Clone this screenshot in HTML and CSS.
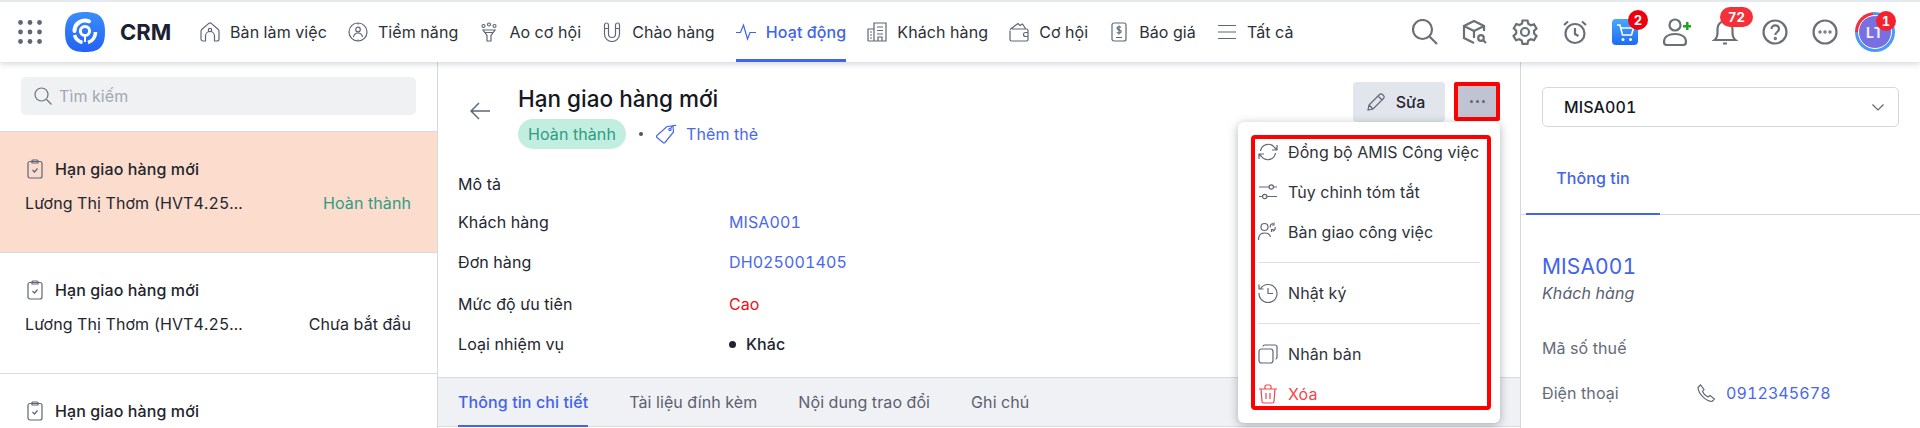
FILE: index.html
```html
<!DOCTYPE html>
<html lang="vi">
<head>
  <meta charset="UTF-8" />
  <meta name="viewport" content="width=device-width,initial-scale=1.0" />
  <title>CRM - Hoạt động</title>
  <link rel="stylesheet" href="styles.css">
</head>
<body>
  <header class="topbar">
    <svg class="apps" width="24" height="24" viewBox="0 0 24 24" fill="#5f6675">
      <circle cx="2.500" cy="2.500" r="2.400"/><circle cx="12" cy="2.500" r="2.400"/><circle cx="21.500" cy="2.500" r="2.400"/>
      <circle cx="2.500" cy="12" r="2.400"/><circle cx="12" cy="12" r="2.400"/><circle cx="21.500" cy="12" r="2.400"/>
      <circle cx="2.500" cy="21.500" r="2.400"/><circle cx="12" cy="21.500" r="2.400"/><circle cx="21.500" cy="21.500" r="2.400"/>
    </svg>
    <svg class="logo" width="40" height="40" viewBox="0 0 40 40">
      <defs><linearGradient id="logoBg" x1="0" y1="0" x2="0" y2="1"><stop offset="0" stop-color="#3a8dfb"/><stop offset="1" stop-color="#2361f6"/></linearGradient></defs>
      <path d="M20 0C33 0 40 4 40 20S33 40 20 40 0 36 0 20 7 0 20 0Z" fill="url(#logoBg)"/>
      <circle cx="20" cy="19" r="4.600" fill="none" stroke="#fff" stroke-width="3"/>
      <path d="M9.500 19A10.500 10.500 0 0 1 24 9.300" fill="none" stroke="#fff" stroke-width="4" stroke-linecap="round"/>
      <path d="M9.500 23A11 11 0 0 0 17.500 30.500M30.500 20A11 11 0 0 1 23 30.500" fill="none" stroke="#fff" stroke-width="3.600"/>
      <path d="M20 24V30" stroke="#fff" stroke-width="2"/>
    </svg>
    <span class="brand">CRM</span>

    <nav class="nav">
      <a class="nav-item">
        <svg class="ico" width="20" height="20" viewBox="0 0 20 20"><path d="M1 9.500c0-1 .4-1.700 1-2.200L8.500 1.600a2.300 2.300 0 0 1 3 0L18 7.300c.6.500 1 1.200 1 2.200V17a2 2 0 0 1-2 2h-2.500v-5a4.500 4.500 0 0 0-9 0v5H3a2 2 0 0 1-2-2Z"/><circle cx="10" cy="8" r="1.700"/></svg>
        Bàn làm việc
      </a>
      <a class="nav-item">
        <svg class="ico" width="20" height="20" viewBox="0 0 20 20"><circle cx="10" cy="10" r="9"/><circle cx="10" cy="7.500" r="2.300"/><path d="M5.500 15c.5-3 2.300-4 4.500-4s4 1 4.500 4M10 1v1.500M10 17.500V19"/></svg>
        Tiềm năng
      </a>
      <a class="nav-item">
        <svg class="ico" width="20" height="20" viewBox="0 0 20 20"><circle cx="4.500" cy="4" r="1.500"/><circle cx="10" cy="2.500" r="1.500"/><circle cx="15.500" cy="4" r="1.500"/><path d="M4 8h12l-4 5.500V19H8v-5.500ZM6 10.500h8"/></svg>
        Ao cơ hội
      </a>
      <a class="nav-item">
        <svg class="ico" width="20" height="20" viewBox="0 0 20 20"><path d="M2.500 3a2 2 0 0 1 4 0v9a3.500 3.500 0 0 0 7 0V3a2 2 0 0 1 4 0v9a7.500 7.500 0 0 1-15 0ZM2.500 6.500h4M13.500 6.500h4"/></svg>
        Chào hàng
      </a>
      <a class="nav-item active">
        <svg class="ico" width="20" height="20" viewBox="0 0 20 20"><path d="M0 10.500h4.500L7.500 3l4 14 2.500-6.500h6"/></svg>
        Hoạt động
      </a>
      <a class="nav-item">
        <svg class="ico" width="20" height="20" viewBox="0 0 20 20"><path d="M1 19V7h6M7 19V1h12v18ZM1 19h18M3 10h2M3 13h2M3 16h2M10 5h6M10 8.500h6M10 12h6M11 19v-4h4v4"/></svg>
        Khách hàng
      </a>
      <a class="nav-item">
        <svg class="ico" width="20" height="20" viewBox="0 0 20 20"><path d="M1 7.500 9 1.500l2 2 2.500-1.500 3 4.500M3 7h14.500a1.500 1.500 0 0 1 1.500 1.500v9a1.500 1.500 0 0 1-1.500 1.500h-15A1.500 1.500 0 0 1 1 17.500V8.500M19 10.500h-2.500a2 2 0 0 0 0 4H19"/></svg>
        Cơ hội
      </a>
      <a class="nav-item">
        <svg class="ico ico-quote" width="16" height="20" viewBox="0 0 16 20"><rect x="1" y="1" width="14" height="18" rx="2"/><path d="M5 15.500h6M10 5.500C9.500 4.500 6 4.300 6 6.300c0 2 4.200 1.200 4.200 3.200 0 2-3.700 1.800-4.400.7M8 3.500v9"/></svg>
        Báo giá
      </a>
      <a class="nav-item">
        <svg class="ico" width="20" height="20" viewBox="0 0 20 20"><path d="M1 3.500h18M1 10h18M1 16.500h18"/></svg>
        Tất cả
      </a>
    </nav>

    <div class="tools">
      <svg class="tool" width="26" height="26" viewBox="0 0 26 26"><circle cx="10.500" cy="10.500" r="9.500"/><path d="m17.500 17.500 7.500 7.500"/></svg>
      <svg class="tool" width="26" height="26" viewBox="0 0 26 26"><path d="M12 24 2 19V7l10-5 10 5v5M2 7l10 5 10-5M12 12v7"/><circle cx="19" cy="19" r="2.800"/><path d="m21 21 3 3"/></svg>
      <svg class="tool" width="26" height="26" viewBox="0 0 26 26"><path d="M10.500 1.500h5l.8 3.300 2.500 1.400 3.200-1 2.500 4.300-2.400 2.300v2.800l2.400 2.300-2.500 4.300-3.200-1-2.500 1.400-.8 3.300h-5l-.8-3.300-2.500-1.400-3.200 1-2.500-4.300L4.200 14.400v-2.800L1.800 9.300l2.500-4.300 3.200 1 2.500-1.400Z"/><circle cx="13" cy="13" r="4"/></svg>
      <svg class="tool" width="26" height="26" viewBox="0 0 26 26"><circle cx="13" cy="14.500" r="9.500"/><path d="M13 9v6l3.500 2M2 6l4-3.500M24 6l-4-3.500"/></svg>
      <span class="tool-wrap">
        <svg width="26" height="26" viewBox="0 0 26 26">
          <defs><linearGradient id="cartBg" x1="0" y1="0" x2="0" y2="1"><stop offset="0" stop-color="#49a7fb"/><stop offset="1" stop-color="#1d6cf2"/></linearGradient></defs>
          <rect width="26" height="26" rx="4" fill="url(#cartBg)"/>
          <path d="M5 6h3l2.500 10h9l2-7H9" fill="none" stroke="#fff" stroke-width="1.600"/>
          <circle cx="11" cy="20.500" r="1.500" fill="#fff"/><circle cx="18.500" cy="20.500" r="1.500" fill="#fff"/>
        </svg>
        <span class="badge badge-cart">2</span>
      </span>
      <span class="tool-wrap">
        <svg class="tool" width="26" height="28" viewBox="0 0 26 28"><circle cx="13" cy="7" r="5.500"/><path d="M2 24c0-5 4.500-8 11-8s11 3 11 8c0 2-1.500 3-3 3H5c-1.500 0-3-1-3-3Z"/></svg>
        <span class="plus"></span>
      </span>
      <span class="tool-wrap">
        <svg class="tool" width="26" height="26" viewBox="0 0 26 26"><path d="M2.500 21c2.500-2 3-4 3-7.500V9.500a7.500 7.500 0 0 1 15 0v4c0 3.500.5 5.500 3 7.500ZM11 24.500h4"/></svg>
        <span class="badge badge-bell">72</span>
      </span>
      <svg class="tool" width="26" height="26" viewBox="0 0 26 26"><circle cx="13" cy="13" r="11.500"/><path d="M9.500 10c0-5 7.500-4.500 7.500 0 0 3-3.700 3-3.700 6"/><circle class="solid" cx="13.300" cy="19.500" r=".6"/></svg>
      <svg class="tool" width="26" height="26" viewBox="0 0 26 26"><circle cx="13" cy="13" r="11.500"/><circle class="solid" cx="8" cy="13" r=".6"/><circle class="solid" cx="13" cy="13" r=".6"/><circle class="solid" cx="18" cy="13" r=".6"/></svg>
      <span class="avatar">
        <span class="avatar-in">LT</span>
        <span class="badge badge-avatar">1</span>
      </span>
    </div>
  </header>

  <main class="layout">
    <aside class="list-pane">
      <div class="search-wrap">
        <div class="search">
          <svg class="ico" width="18" height="18" viewBox="0 0 18 18"><circle cx="7.500" cy="7.500" r="6.500"/><path d="m12.500 12.500 5 5"/></svg>
          <span>Tìm kiếm</span>
        </div>
      </div>
      <div class="task selected">
        <div class="task-title">
          <svg class="ico" width="16" height="20" viewBox="0 0 16 20"><rect x="1" y="2.500" width="14" height="16.500" rx="2"/><path d="M5 4V2a1 1 0 0 1 1-1h4a1 1 0 0 1 1 1v2ZM5.500 11l2 2 3-3.500"/></svg>
          Hạn giao hàng mới
        </div>
        <div class="task-sub"><span>Lương Thị Thơm (HVT4.25...</span><span class="done">Hoàn thành</span></div>
      </div>
      <div class="task">
        <div class="task-title">
          <svg class="ico" width="16" height="20" viewBox="0 0 16 20"><rect x="1" y="2.500" width="14" height="16.500" rx="2"/><path d="M5 4V2a1 1 0 0 1 1-1h4a1 1 0 0 1 1 1v2ZM5.500 11l2 2 3-3.500"/></svg>
          Hạn giao hàng mới
        </div>
        <div class="task-sub"><span>Lương Thị Thơm (HVT4.25...</span><span>Chưa bắt đầu</span></div>
      </div>
      <div class="task">
        <div class="task-title">
          <svg class="ico" width="16" height="20" viewBox="0 0 16 20"><rect x="1" y="2.500" width="14" height="16.500" rx="2"/><path d="M5 4V2a1 1 0 0 1 1-1h4a1 1 0 0 1 1 1v2ZM5.500 11l2 2 3-3.500"/></svg>
          Hạn giao hàng mới
        </div>
      </div>
    </aside>

    <section class="detail">
      <div class="detail-body">
        <div class="detail-head">
          <svg class="back" width="20" height="18" viewBox="0 0 20 18"><path d="M20 9H1M9 1 1 9l8 8"/></svg>
          <div>
            <h1 class="detail-title">Hạn giao hàng mới</h1>
            <div class="detail-tags">
              <span class="pill">Hoàn thành</span>
              <span class="sep"></span>
              <svg class="ico-blue" width="21" height="20" viewBox="0 0 21 20"><path d="M1 11.500 11 2.500l6-.5 .5 6-8.500 10.500a1.500 1.500 0 0 1-2 0L1 13.500a1.500 1.500 0 0 1 0-2Z"/><circle cx="14" cy="5.500" r="1.200"/><path d="M15 4c1-2.500 4.500-3.500 5-2"/></svg>
              <a class="link">Thêm thẻ</a>
            </div>
          </div>
        </div>
        <div class="fields">
          <span>Mô tả</span><span></span>
          <span>Khách hàng</span><a class="link">MISA001</a>
          <span>Đơn hàng</span><a class="link">DH025001405</a>
          <span>Mức độ ưu tiên</span><span class="high">Cao</span>
          <span>Loại nhiệm vụ</span><span class="type"><i class="bullet"></i>Khác</span>
        </div>
      </div>
      <div class="tabs">
        <a class="tab active">Thông tin chi tiết</a>
        <a class="tab">Tài liệu đính kèm</a>
        <a class="tab">Nội dung trao đổi</a>
        <a class="tab">Ghi chú</a>
      </div>

      <div class="actions">
        <button class="btn-edit">
          <svg class="ico" width="18" height="18" viewBox="0 0 18 18"><path d="M1 17l1-5L12.500 1.500a2 2 0 0 1 3 0l1 1a2 2 0 0 1 0 3L6 16ZM2 12l4 4M11 3l4 4"/></svg>
          Sửa
        </button>
        <button class="btn-more"><i></i><i></i><i></i></button>
      </div>

      <div class="menu">
        <div class="menu-mark">
          <a class="menu-item">
            <svg class="ico" width="20" height="20" viewBox="0 0 20 20"><path d="M2.500 9A7.800 7.800 0 0 1 16.500 5.500L19 8M19 3v5h-5M17.500 11A7.800 7.800 0 0 1 3.500 14.500L1 12M1 17v-5h5"/></svg>
            Đồng bộ AMIS Công việc
          </a>
          <a class="menu-item">
            <svg class="ico" width="20" height="20" viewBox="0 0 20 20"><path d="M1 5h10M15.500 5H19M1 14.500h3.500M9 14.500h10"/><circle cx="13.300" cy="5" r="2.200"/><circle cx="6.700" cy="14.500" r="2.200"/></svg>
            Tùy chỉnh tóm tắt
          </a>
          <a class="menu-item">
            <svg class="ico" width="20" height="20" viewBox="0 0 20 20"><circle cx="6.500" cy="5" r="3.500"/><path d="M.5 18c0-5 2.500-7 6-7s5.500 1.500 6 4M15 1.500a3 3 0 0 0-2.500 4M14.500 9a3 3 0 0 0 2.500-4M16 .5v2.500h-2M13.500 10V7.500h2"/></svg>
            Bàn giao công việc
          </a>
          <hr class="menu-line">
          <a class="menu-item item-log">
            <svg class="ico" width="20" height="20" viewBox="0 0 20 20"><path d="M2.500 5.500A9 9 0 1 1 1 10M1 1.500v4.500h4.500M10 5v5.500h5"/></svg>
            Nhật ký
          </a>
          <hr class="menu-line">
          <a class="menu-item">
            <svg class="ico" width="20" height="20" viewBox="0 0 20 20"><rect x="1" y="5" width="14" height="14" rx="2.500"/><path d="M5 2.500A1.500 1.500 0 0 1 6.500 1H17a2 2 0 0 1 2 2v10.500a1.500 1.500 0 0 1-1.500 1.500"/></svg>
            Nhân bản
          </a>
          <a class="menu-item danger">
            <svg class="ico" width="20" height="20" viewBox="0 0 20 20"><path d="M1 5h18M7 5V2.500A1.500 1.500 0 0 1 8.500 1h3A1.500 1.500 0 0 1 13 2.500V5M3 5l1 12.500A1.500 1.500 0 0 0 5.500 19h9a1.500 1.500 0 0 0 1.500-1.500L17 5M8 9v6M12 9v6"/></svg>
            Xóa
          </a>
        </div>
      </div>
    </section>

    <aside class="side-pane">
      <div class="select">
        <span>MISA001</span>
        <svg class="ico" width="12" height="7" viewBox="0 0 12 7"><path d="m.5.500 5.500 5.500 5.500-5.500"/></svg>
      </div>
      <div class="side-tabs"><a class="side-tab">Thông tin</a></div>
      <div class="side-body">
        <a class="side-name">MISA001</a>
        <em class="side-kind">Khách hàng</em>
        <div class="side-row tax"><span>Mã số thuế</span></div>
        <div class="side-row">
          <span>Điện thoại</span>
          <svg class="ico phone" width="19" height="19" viewBox="0 0 19 19"><path d="M1 3.500 3.500 1 7 5.500 5.500 7.500c1 2.500 3 4.500 5.500 5.500l2-1.500 4.500 3.500-2.500 2.500C9 17.500 1.500 10 1 3.500Z"/></svg>
          <a class="link">0912345678</a>
        </div>
      </div>
    </aside>
  </main>
</body>
</html>
```

FILE: styles.css
```css
* { margin: 0; padding: 0; box-sizing: border-box; }
html, body { height: 428px; overflow: hidden; }
body {
  font-family: Inter, "Noto Sans", sans-serif;
  font-size: 16px;
  font-variant-numeric: tabular-nums;
  letter-spacing: 0.1px;
  color: #23262f;
  background: #fff;
  display: flex;
  flex-direction: column;
}
a { color: inherit; text-decoration: none; }
.ico, .tool { fill: none; stroke: #5f6675; stroke-width: 1.2; flex-shrink: 0; }
.tool { stroke: #6b7078; stroke-width: 2.2; }
.tool .solid { fill: #6b7078; }
.link { color: #4a68ee; }

/* top bar */
.topbar {
  height: 60px;
  flex-shrink: 0;
  margin-top: 2px;
  display: flex;
  align-items: center;
  background: #fff;
  box-shadow: 0 -2px 0 #e4e9ef, 0 2px 6px rgba(40, 50, 70, 0.2);
  position: relative;
  z-index: 3;
  padding-left: 18px;
}
.logo { margin-left: 23px; }
.brand { margin-left: 15px; font-size: 22px; font-weight: 700; letter-spacing: 0; color: #1a2130; width: 52px; }
.nav { display: flex; height: 100%; gap: 21px; margin-left: 28px; }
.nav-item {
  display: flex;
  align-items: center;
  gap: 10px;
  color: #2c3038;
  border-bottom: 3px solid transparent;
  border-top: 3px solid transparent;
}
.nav-item.active { color: #4263eb; font-weight: 500; border-bottom-color: #4263eb; }
.nav-item.active .ico { stroke: #4263eb; }
.ico-quote { margin: 0 2px; }

.tools {
  margin-left: auto;
  margin-right: 25px;
  display: flex;
  align-items: center;
  gap: 24px;
}
.tool-wrap { position: relative; display: flex; }
.badge {
  position: absolute;
  height: 20px;
  min-width: 20px;
  border-radius: 10px;
  background: #f5222d;
  color: #fff;
  font-size: 13px;
  font-weight: 700;
  display: flex;
  align-items: center;
  justify-content: center;
}
.badge-cart { top: -9px; right: -10px; background: #f0000f; }
.badge-bell { top: -12px; left: 8px; width: 33px; background: #f5303a; }
.plus {
  position: absolute;
  top: 4px;
  left: 21px;
  width: 8px;
  height: 8px;
  background:
    linear-gradient(#22a322, #22a322) center / 8px 2.500px no-repeat,
    linear-gradient(#22a322, #22a322) center / 2.500px 8px no-repeat;
}
.avatar {
  position: relative;
  margin-left: -7px;
  width: 40px;
  height: 40px;
  border-radius: 50%;
  background: conic-gradient(#4a9bf6 0 270deg, #f0303c 270deg 355deg, #4a9bf6 355deg);
  display: flex;
  align-items: center;
  justify-content: center;
}
.avatar-in {
  width: 34px;
  height: 34px;
  border-radius: 50%;
  border: 1px solid #fff;
  background: #7a6fe0;
  color: #f1f0ff;
  font-size: 14px;
  font-weight: 700;
  letter-spacing: 1px;
  display: flex;
  align-items: center;
  justify-content: center;
}
.badge-avatar { top: -1px; right: -1px; }

/* three panes */
.layout { flex: 1; display: flex; min-height: 0; }

.list-pane {
  width: 438px;
  flex-shrink: 0;
  border-right: 1px solid #d5d8df;
  overflow: hidden;
}
.search-wrap { padding: 15px 21px 16px; }
.search {
  height: 38px;
  background: #f0f1f3;
  border-radius: 5px;
  padding: 0 0 1px 13px;
  display: flex;
  align-items: center;
  gap: 7px;
  color: #a3a8b6;
}
.search .ico { stroke: #6b7280; }
.task {
  height: 121px;
  padding: 27px 26px 0 25px;
  border-top: 1px solid #d8dbe1;
}
.task.selected { background: #fbdccd; }
.task-title {
  display: flex;
  align-items: center;
  gap: 12px;
  padding-left: 2px;
  font-weight: 500;
  color: #22252c;
}
.task-sub {
  margin-top: 14px;
  display: flex;
  justify-content: space-between;
}
.done { color: #2e9c85; }

.detail {
  flex: 1;
  min-width: 0;
  display: flex;
  flex-direction: column;
  position: relative;
  border-right: 1px solid #d5d8df;
  padding-bottom: 1px;
}
.detail-body { flex: 1; padding: 0 20px; }
.detail-head { display: flex; padding-top: 20px; }
.back { fill: none; stroke: #5f6675; stroke-width: 1.500; margin: 20px 28px 0 12px; }
.detail-title { font-size: 22.500px; font-weight: 500; letter-spacing: 0; line-height: 33px; color: #15181f; }
.detail-tags { display: flex; align-items: center; margin-top: 4px; }
.pill {
  height: 30px;
  width: 108px;
  border-radius: 15px;
  background: #c2eee0;
  color: #2e9c85;
  display: flex;
  align-items: center;
  justify-content: center;
}
.sep { width: 4px; height: 4px; border-radius: 50%; background: #4b5563; margin: 0 13px; }
.ico-blue { fill: none; stroke: #4a68ee; stroke-width: 1.200; margin-right: 9px; }

.fields {
  margin-top: 16px;
  display: grid;
  grid-template-columns: 271px 1fr;
  grid-template-rows: 38px 38px 41px 43px 38px;
  align-items: center;
}
.high { color: #f00d16; }
.type { display: flex; align-items: center; font-weight: 500; }
.bullet { width: 7px; height: 7px; border-radius: 50%; background: #1f2430; margin-right: 10px; }

.tabs {
  height: 50px;
  flex-shrink: 0;
  display: flex;
  gap: 41px;
  padding: 0 20px;
  background: #f0f1f4;
  border-top: 1px solid #d8dbe1;
  border-bottom: 1px solid #d8dbe1;
}
.tab {
  display: flex;
  align-items: center;
  color: #5b6070;
  border-bottom: 2px solid transparent;
  margin-bottom: -1px;
}
.tab.active { color: #4263eb; font-weight: 500; border-bottom-color: #4263eb; }

.actions {
  position: absolute;
  top: 20px;
  right: 20px;
  display: flex;
  align-items: flex-start;
  gap: 9px;
}
.btn-edit {
  width: 92px;
  height: 40px;
  padding-right: 6px;
  border: none;
  border-radius: 4px;
  background: #e3e5ec;
  font: 500 16px Inter, sans-serif;
  color: #23262f;
  display: flex;
  align-items: center;
  justify-content: center;
  gap: 11px;
}
.btn-more {
  width: 46px;
  height: 39px;
  border: 4px solid #f00;
  border-radius: 2px;
  background: #c0c4d2;
  display: flex;
  align-items: center;
  justify-content: center;
  gap: 3px;
}
.btn-more i { width: 3px; height: 3px; border-radius: 50%; background: #5f6675; }

.menu {
  position: absolute;
  top: 60px;
  right: 20px;
  width: 262px;
  height: 301px;
  padding: 13px 9px 13px 13px;
  background: #fff;
  border-radius: 6px;
  box-shadow: 0 2px 10px rgba(30, 40, 60, 0.35);
  z-index: 2;
}
.menu-mark {
  height: 275px;
  border: 4px solid #f00;
  border-radius: 4px;
  padding: 0 7px 0 3px;
}
.menu-item {
  height: 40px;
  display: flex;
  align-items: center;
  gap: 10px;
  color: #2f333c;
}
.menu-item:first-child { margin-top: -7px; }
.item-log { height: 60px; }
.menu-line { border: none; border-top: 1px solid #dfe1e6; margin: 10px 0 0; }
.item-log + .menu-line { margin-top: 0; }
.menu-line + .item-log { margin-top: 0; }
.menu-line + .menu-item:not(.item-log) { margin-top: 10px; }
.danger { color: #f4444c; }
.danger .ico { stroke: #f4444c; }

.side-pane { width: 399px; flex-shrink: 0; }
.select {
  margin: 25px 21px 0;
  height: 40px;
  border: 1px solid #d5d8df;
  border-radius: 5px;
  padding: 0 14px 0 21px;
  display: flex;
  align-items: center;
  justify-content: space-between;
  font-weight: 500;
  color: #15181f;
}
.side-tabs { margin-top: 17px; height: 71px; display: flex; border-bottom: 1px solid #d5d8df; padding-left: 5px; }
.side-tab {
  width: 134px;
  height: 71px;
  padding-bottom: 2px;
  display: flex;
  align-items: center;
  justify-content: center;
  font-weight: 500;
  color: #4263eb;
  border-bottom: 2px solid #4263eb;
}
.side-body { padding: 39px 21px 0; }
.side-name { display: block; font-size: 21px; line-height: 26px; color: #4263eb; }
.side-kind { display: block; margin-top: 1px; line-height: 24px; color: #5b6070; }
.side-row {
  display: flex;
  align-items: center;
  height: 24px;
  margin-top: 21px;
  color: #666b7a;
}
.side-row span { width: 155px; }
.side-row.tax { margin-top: 31px; }
.phone { margin-right: 10px; }
```
